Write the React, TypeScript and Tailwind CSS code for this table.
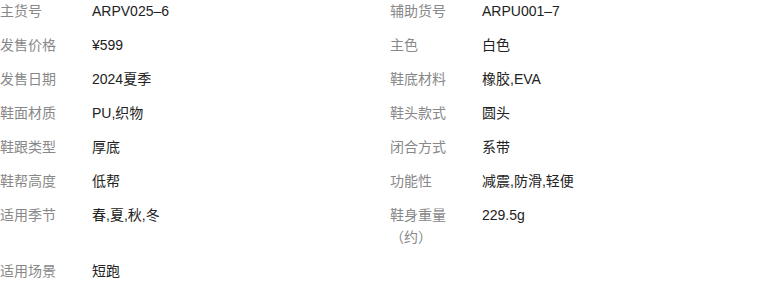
import React from 'react';

const specs: [string, string][] = [
  ['主货号', 'ARPV025–6'],
  ['辅助货号', 'ARPU001–7'],
  ['发售价格', '¥599'],
  ['主色', '白色'],
  ['发售日期', '2024夏季'],
  ['鞋底材料', '橡胶,EVA'],
  ['鞋面材质', 'PU,织物'],
  ['鞋头款式', '圆头'],
  ['鞋跟类型', '厚底'],
  ['闭合方式', '系带'],
  ['鞋帮高度', '低帮'],
  ['功能性', '减震,防滑,轻便'],
  ['适用季节', '春,夏,秋,冬'],
  ['鞋身重量（约）', '229.5g'],
  ['适用场景', '短跑'],
];

export default function App() {
  return (
    <div
      className="w-[780px] bg-white text-[14px] leading-[22px]"
      style={{ fontFamily: '"Liberation Sans", "Noto Sans CJK SC", sans-serif' }}
    >
      {/* spec table, two items per row */}
      <dl className="grid grid-cols-[390px_390px] gap-y-3">
        {specs.map(([label, value]) => (
          <div key={label} className="flex items-start">
            <dt className="w-[92px] shrink-0 pr-3 text-[#888]">{label}</dt>
            <dd className="text-[#222]">{value}</dd>
          </div>
        ))}
      </dl>
    </div>
  );
}
